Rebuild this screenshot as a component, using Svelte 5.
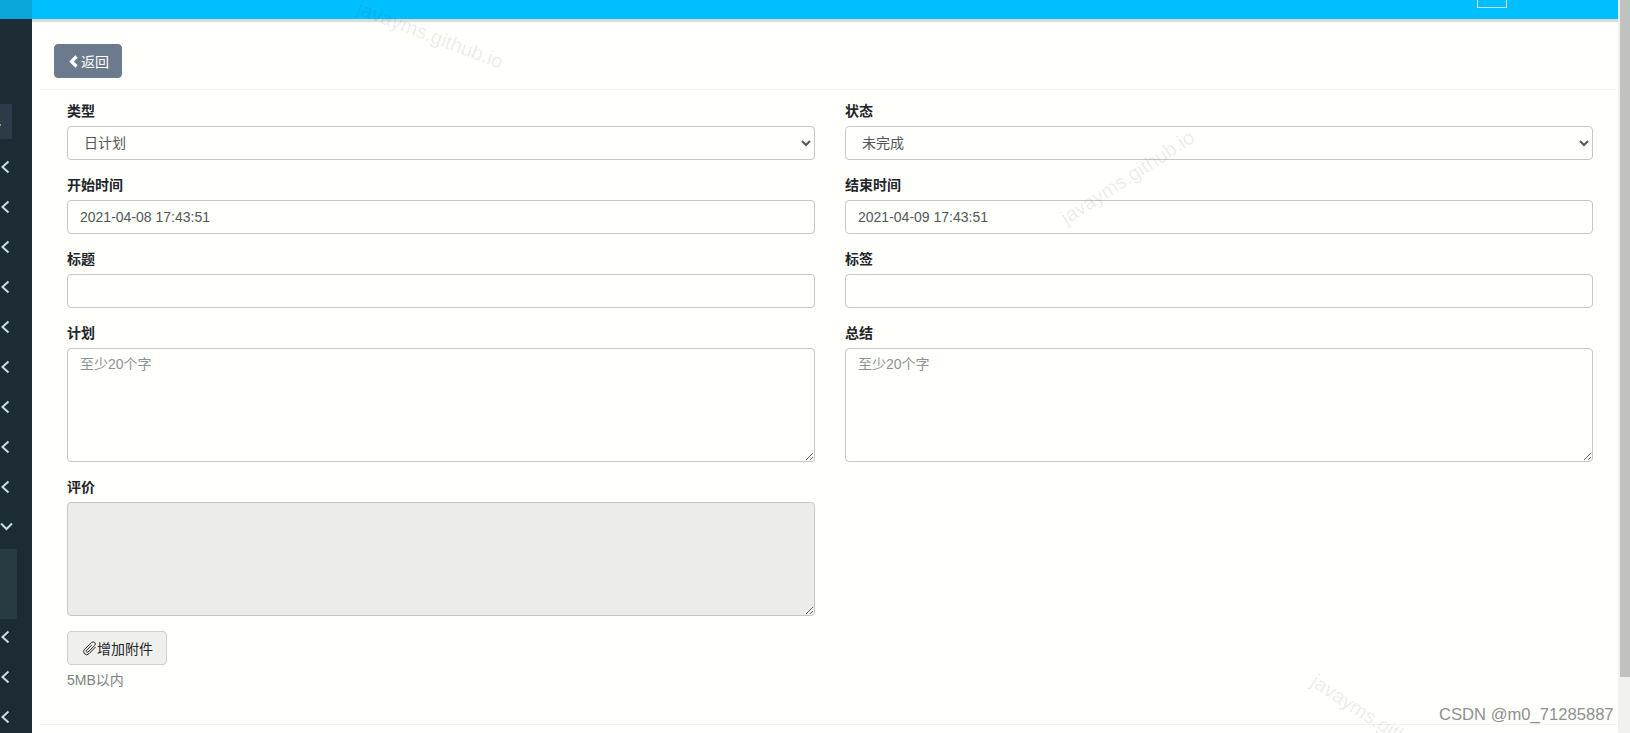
<script>
    const rows_top = 9;
    const rows_bottom = 3;
    const counter = (n) => Array.from({ length: n }, (_, i) => i);
</script>

<div class="page">
    <aside class="sidebar">
        <div class="side_logo"></div>
        <div class="side_active"><span class="dot"></span></div>
        {#each counter(rows_top) as i (i)}
            <div class="side_row">
                <svg width="11" height="14" viewBox="0 0 11 14"><path d="M8.500 1.500 2.500 7l6 5.500" /></svg>
            </div>
        {/each}
        <div class="side_row">
            <svg width="14" height="10" viewBox="0 0 14 10"><path d="M1 1.500 6.500 7l5.500-5.500" /></svg>
        </div>
        <div class="side_sub"><div class="side_sub_item"></div></div>
        {#each counter(rows_bottom) as i (i)}
            <div class="side_row">
                <svg width="11" height="14" viewBox="0 0 11 14"><path d="M8.500 1.500 2.500 7l6 5.500" /></svg>
            </div>
        {/each}
    </aside>

    <div class="main">
        <header class="topbar">
            <div class="user_box"></div>
        </header>

        <section class="card">
            <div class="card_head">
                <button class="back">
                    <svg width="13" height="13" viewBox="0 0 13 13"><path d="M8.500 1.500 3.500 6.500l5 5" /></svg>返回
                </button>
            </div>

            <form class="form">
                <div class="group">
                    <label for="type">类型</label>
                    <select id="type"><option>日计划</option></select>
                </div>
                <div class="group">
                    <label for="status">状态</label>
                    <select id="status"><option>未完成</option></select>
                </div>
                <div class="group">
                    <label for="start">开始时间</label>
                    <input id="start" value="2021-04-08 17:43:51" />
                </div>
                <div class="group">
                    <label for="end">结束时间</label>
                    <input id="end" value="2021-04-09 17:43:51" />
                </div>
                <div class="group">
                    <label for="title">标题</label>
                    <input id="title" />
                </div>
                <div class="group">
                    <label for="tags">标签</label>
                    <input id="tags" />
                </div>
                <div class="group">
                    <label for="plan">计划</label>
                    <textarea id="plan" placeholder="至少20个字"></textarea>
                </div>
                <div class="group">
                    <label for="summary">总结</label>
                    <textarea id="summary" placeholder="至少20个字"></textarea>
                </div>
                <div class="group">
                    <label for="review">评价</label>
                    <textarea id="review" disabled></textarea>
                </div>
                <div class="attach">
                    <button type="button" class="add_file">
                        <svg width="15" height="15" viewBox="0 0 15 15"><path d="M13.600 6 7 12.700a3.100 3.100 0 0 1-4.500-4.400L9.700 1.500a2.100 2.100 0 0 1 3 3L6 11a1.100 1.100 0 0 1-1.600-1.500l5.300-5.300" /></svg>增加附件
                    </button>
                    <div class="hint">5MB以内</div>
                </div>
            </form>
            <div class="card_foot"></div>
        </section>
    </div>

    <div class="scrollbar"><div class="thumb"></div></div>

    <span class="mark mark_a">javayms.github.io</span>
    <span class="mark mark_b">javayms.github.io</span>
    <span class="mark mark_c">javayms.github.io</span>
    <span class="csdn">CSDN @m0_71285887</span>
</div>

<style>
    :global(body) {
        margin: 0;
        overflow: hidden;
        background: #fffffc;
        font-family: "Liberation Sans", "Noto Sans CJK SC", sans-serif;
        font-size: 14px;
        color: #212529;
    }

    .page {
        display: flex;
        height: 733px;
        position: relative;
        overflow: hidden;
    }

    .sidebar {
        width: 32px;
        flex: none;
        background: #1c2b34;
    }

    .side_logo {
        height: 19px;
        background: #0aa5d9;
    }

    .side_active {
        width: 12px;
        height: 35px;
        margin: 85px 0 8px;
        background: #2c3b47;
        position: relative;
    }

    .dot {
        position: absolute;
        left: 0;
        top: 20px;
        width: 1px;
        height: 2px;
        background: #c98a6a;
    }

    .side_row {
        height: 40px;
        display: flex;
        align-items: center;
    }

    .side_row svg {
        display: block;
        fill: none;
        stroke: #c8dde7;
        stroke-width: 2;
    }

    .side_sub {
        height: 70px;
        padding-top: 2px;
        box-sizing: border-box;
    }

    .side_sub_item {
        width: 17px;
        height: 70px;
        background: #283a42;
    }

    .main {
        flex: 1;
        min-width: 0;
    }

    .topbar {
        height: 19px;
        background: #00bfff;
        border-bottom: 3px solid #d9dadb;
        position: relative;
    }

    .user_box {
        position: absolute;
        left: 1445px;
        top: -2px;
        width: 28px;
        height: 8px;
        border: 1px solid #d8d8d8;
    }

    .card {
        margin: 0 1px 0 8px;
    }

    .card_head {
        height: 68px;
        padding: 22px 0 0 14px;
        box-sizing: border-box;
        border-bottom: 1px solid #f3f3f1;
    }

    .back {
        display: flex;
        align-items: center;
        width: 68px;
        height: 34px;
        padding: 0 0 0 13px;
        border: 1px solid #6c7a8d;
        border-radius: 4px;
        background: #6c7a8d;
        color: #fff;
        font: inherit;
    }

    .back svg {
        fill: none;
        stroke: #fff;
        stroke-width: 3.2;
        flex: none;
    }

    .form {
        display: grid;
        grid-template-columns: 748px 748px;
        column-gap: 30px;
        padding: 10px 0 0 27px;
    }

    .group {
        margin-bottom: 14px;
    }

    label {
        display: block;
        height: 19px;
        padding-top: 1px;
        line-height: 20px;
        margin-bottom: 6px;
        font-weight: 700;
    }

    input,
    select,
    textarea {
        display: block;
        width: 100%;
        box-sizing: border-box;
        border: 1px solid #c6c6c3;
        border-radius: 4px;
        background: #fffffc;
        color: #52565a;
        font: inherit;
        outline: none;
    }

    input,
    select {
        height: 34px;
        padding: 0 12px;
    }

    textarea {
        height: 114px;
        padding: 4px 12px;
        resize: vertical;
    }

    textarea::placeholder {
        color: #8d9196;
    }

    textarea:disabled {
        background: #ecedea;
    }

    .attach {
        grid-column: 1;
        margin-top: 1px;
    }

    .add_file {
        display: flex;
        align-items: center;
        width: 100px;
        height: 34px;
        padding: 0 0 0 14px;
        border: 1px solid #cfcfcb;
        border-radius: 4px;
        background: #efefeb;
        color: #212529;
        font: inherit;
    }

    .add_file svg {
        flex: none;
        fill: none;
        stroke: #212529;
        stroke-width: 1;
    }

    .hint {
        margin-top: 5px;
        line-height: 20px;
        color: #7b7f84;
    }

    .card_foot {
        margin-top: 34px;
        border-top: 1px solid #f3f3f1;
    }

    .scrollbar {
        width: 12px;
        flex: none;
        box-sizing: border-box;
        padding-left: 2px;
        background: #f1f1f0;
    }

    .thumb {
        height: 677px;
        background: #c1c1bd;
    }

    /* faint, so that the bar and the borders show through */
    .mark {
        position: absolute;
        font-size: 20px;
        color: rgba(60, 60, 50, 0.1);
        white-space: nowrap;
        transform-origin: left center;
    }

    .mark_a {
        left: 358px;
        top: -4px;
        transform: rotate(21deg);
    }

    .mark_b {
        left: 1063px;
        top: 208px;
        transform: rotate(-33deg);
    }

    .mark_c {
        left: 1313px;
        top: 668px;
        transform: rotate(33deg);
    }

    .csdn {
        position: absolute;
        left: 1439px;
        top: 705px;
        font-size: 16.6px;
        color: #8f8f8f;
        white-space: nowrap;
    }
</style>
